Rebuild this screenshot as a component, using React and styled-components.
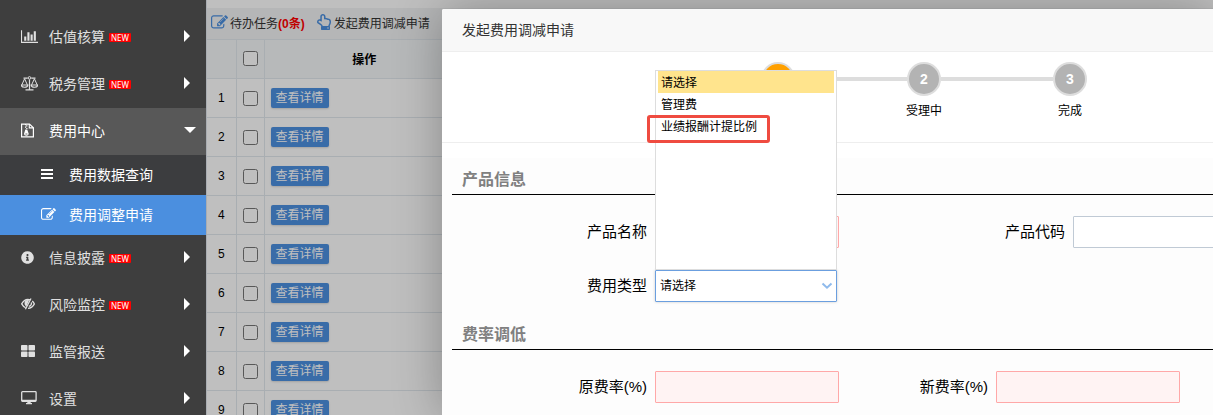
import React from "react"
import styled, { createGlobalStyle } from "styled-components"
import { FaInfoCircle, FaRegHandPointUp } from "react-icons/fa"

const GlobalStyle = createGlobalStyle`
  * {
    box-sizing: border-box;
  }
  body {
    margin: 0;
    font-family: "Liberation Sans", "Noto Sans CJK SC", sans-serif;
    font-size: 12px;
    color: #000;
  }
  button, input, select {
    font-family: inherit;
  }
`

const ChartIcon = () => (
  <svg width="17" height="15" viewBox="0 0 2048 1792" fill="currentColor">
    <path d="M640 896v512h-256v-512h256zm384-512v1024h-256v-1024h256zm1024 1152v128h-2048v-1536h128v1408h1920zm-640-896v768h-256v-768h256zm384-384v1152h-256v-1152h256z" />
  </svg>
)

const ScaleIcon = () => (
  <svg width="17" height="15" viewBox="0 0 17 15" fill="none" stroke="currentColor">
    <path d="M2.5 2.2h4.2M10.3 2.2h4.2M8.5 3.5v10M4.500 13.800h8" strokeWidth="1.200" />
    <circle cx="8.5" cy="1.9" r="1.3" />
    <path d="M3.6 2.8L.8 8.9M3.6 2.8l2.8 6.1M13.4 2.8l-2.8 6.1M13.4 2.8l2.8 6.1" />
    <path d="M.3 9h6.6c-.2 3-6.4 3-6.6 0zM10.1 9h6.6c-.2 3-6.4 3-6.6 0z" strokeWidth="1.200" />
  </svg>
)

const ArchiveIcon = () => (
  <svg width="13" height="15" viewBox="0 0 13 15" fill="none" stroke="currentColor">
    <path d="M.6 1.1h7.9l3.9 3.7v9.1H.6z" strokeWidth="1.2" />
    <path d="M8.3 1.1v3.8h4" strokeWidth="1.1" />
    <path d="M4 1.6h1.2M5.2 2.9h1.2M4 4.2h1.2M5.2 5.5h1.2" strokeWidth="1.2" />
    <path d="M4.3 6.4h1.900l1.400 4.200c.5 2.900-5 2.900-4.500 0z" fill="currentColor" stroke="none" />
    <path d="M4.4 11h2" stroke="#585858" strokeWidth=".9" />
  </svg>
)

const BarsIcon = () => (
  <svg width="12" height="12" viewBox="0 0 12 12" fill="currentColor">
    <path d="M0 1h12v2H0zM0 5h12v2H0zM0 9h12v2H0z" />
  </svg>
)

const EditIcon = ({ size = 15 }) => (
  <svg width={size} height={size} viewBox="0 0 1792 1792" fill="currentColor">
    <path d="M888 1184l116-116-152-152-116 116v56h96v96h56zm440-720q-16-16-33 1l-350 350q-17 17-1 33t33-1l350-350q17-17 1-33zm80 594v190q0 119-84.500 203.500t-203.500 84.500h-832q-119 0-203.500-84.500t-84.500-203.500v-832q0-119 84.500-203.500t203.500-84.500h832q63 0 117 25 15 7 18 23 3 17-9 29l-49 49q-14 14-32 8-23-6-45-6h-832q-66 0-113 47t-47 113v832q0 66 47 113t113 47h832q66 0 113-47t47-113v-126q0-13 9-22l64-64q15-15 35-7t20 29zm-96-738l288 288-672 672h-288v-288zm444 132l-92 92-288-288 92-92q28-28 68-28t68 28l152 152q28 28 28 68t-28 68z" />
  </svg>
)

const EyeSlashIcon = () => (
  <svg width="14" height="12" viewBox="0 0 14 12" fill="none" stroke="currentColor">
    <path d="M9.500 1.900C6 .8 2.600 2.300.7 5.900c1 1.900 2.300 3.100 3.900 3.800" strokeWidth="1.300" />
    <path d="M8 2.300C5.300 1.500 3.200 3.200 3.500 5.800c.1 1.200.9 2.200 1.900 2.700z" fill="currentColor" stroke="none" />
    <path d="M10 .5L4.400 11.300" strokeWidth="1.300" />
    <path d="M11.200 2.900c.9.700 1.600 1.700 2.200 3-1.400 2.700-3.500 4.300-6.400 4.500M10.400 4.400c.3 1.900-.7 3.400-2.600 4" strokeWidth="1.300" />
  </svg>
)

const GridIcon = () => (
  <svg width="14" height="12" viewBox="0 0 14 12" fill="currentColor">
    <rect width="6.500" height="5.500" rx=".8" />
    <rect x="7.500" width="6.500" height="5.500" rx=".8" />
    <rect y="6.500" width="6.500" height="5.500" rx=".8" />
    <rect x="7.500" y="6.500" width="6.500" height="5.500" rx=".8" />
  </svg>
)

const DesktopIcon = () => (
  <svg width="16" height="14" viewBox="0 0 16 14">
    <rect x=".7" y=".7" width="14.400" height="9.600" rx=".8" fill="none" stroke="currentColor" strokeWidth="1.300" />
    <path d="M.8 8.800h14.200v1.500H.8zM6.300 10.500h3.400v1.500h1.300v1.200H5v-1.200h1.300z" fill="currentColor" />
  </svg>
)

const menu = [
  { label: "估值核算", icon: <ChartIcon />, isNew: true },
  { label: "税务管理", icon: <ScaleIcon />, isNew: true },
  {
    label: "费用中心",
    icon: <ArchiveIcon />,
    open: true,
    children: [
      { label: "费用数据查询", icon: <BarsIcon /> },
      { label: "费用调整申请", icon: <EditIcon />, current: true },
    ],
  },
  { label: "信息披露", icon: <FaInfoCircle size={13} />, isNew: true },
  { label: "风险监控", icon: <EyeSlashIcon />, isNew: true },
  { label: "监管报送", icon: <GridIcon /> },
  { label: "设置", icon: <DesktopIcon /> },
]

const rows = [1, 2, 3, 4, 5, 6, 7, 8, 9]

const App = () => (
  <>
    <GlobalStyle />
    <Layout>
      <Sidebar>
        {menu.map(item => (
          <React.Fragment key={item.label}>
            <MenuItem href="#" $open={item.open}>
              <MenuIcon>{item.icon}</MenuIcon>
              {item.label}
              {item.isNew && <NewTag>NEW</NewTag>}
              <Arrow $open={item.open} />
            </MenuItem>
            {item.children && item.children.map(child => (
              <SubItem href="#" key={child.label} $current={child.current}>
                <MenuIcon>{child.icon}</MenuIcon>
                {child.label}
              </SubItem>
            ))}
          </React.Fragment>
        ))}
      </Sidebar>
      <Main>
        <Toolbar>
          <ToolButton type="button">
            <ToolIcon><EditIcon size={17} /></ToolIcon>
            <span>待办任务<Count>(0条)</Count></span>
          </ToolButton>
          <ToolButton type="button">
            <ToolIcon><FaRegHandPointUp size={16} /></ToolIcon>
            发起费用调减申请
          </ToolButton>
        </Toolbar>
        <Table>
          <colgroup>
            <Col $width={29} />
            <Col $width={28} />
            <Col $width={200} />
            <col />
          </colgroup>
          <thead>
            <tr>
              <Th />
              <Th><Check type="checkbox" aria-label="全选" /></Th>
              <Th>操作</Th>
              <Th />
            </tr>
          </thead>
          <tbody>
            {rows.map(n => (
              <tr key={n}>
                <Td>{n}</Td>
                <Td><Check type="checkbox" aria-label={`${n}`} /></Td>
                <Td $left><DetailButton type="button">查看详情</DetailButton></Td>
                <Td />
              </tr>
            ))}
          </tbody>
        </Table>
        <Shade>
          <Dialog role="dialog" aria-labelledby="dialog-title">
            <DialogTitle id="dialog-title">发起费用调减申请</DialogTitle>
            <Steps>
              <Step>
                <Dot $active>1</Dot>
              </Step>
              <Step>
                <Dot>2</Dot>
                受理中
              </Step>
              <Step>
                <Dot>3</Dot>
                完成
              </Step>
            </Steps>
            <Form>
              <SectionTitle>产品信息</SectionTitle>
              <FormRow $second={234}>
                <Label htmlFor="name">产品名称</Label>
                <Input id="name" $required />
                <Label htmlFor="code">产品代码</Label>
                <Input id="code" />
              </FormRow>
              <FormRow $second={234}>
                <Label htmlFor="type">费用类型</Label>
                <SelectBox>
                  <Select id="type">
                    <option>请选择</option>
                  </Select>
                  <Chevron viewBox="0 0 12 8">
                    <path d="M1.500 1.500L6 5.700l4.500-4.200" />
                  </Chevron>
                  <Options role="listbox">
                    <Option role="option" $selected aria-selected="true">请选择</Option>
                    <Option role="option">管理费</Option>
                    <Option role="option">
                      业绩报酬计提比例
                      <Highlight />
                    </Option>
                  </Options>
                </SelectBox>
              </FormRow>
              <SectionTitle>费率调低</SectionTitle>
              <FormRow $second={157}>
                <Label htmlFor="old-rate">原费率(%)</Label>
                <Input id="old-rate" $required />
                <Label htmlFor="new-rate">新费率(%)</Label>
                <Input id="new-rate" $required />
              </FormRow>
            </Form>
          </Dialog>
        </Shade>
      </Main>
    </Layout>
  </>
)

export default App

const Layout = styled.div`
  display: flex;
  height: 100vh;
  overflow: hidden;
`

const Sidebar = styled.nav`
  flex: 0 0 206px;
  padding-top: 14px;
  background: #3e3e3e;
`

const MenuItem = styled.a`
  display: flex;
  align-items: center;
  height: 47px;
  padding: 0 10px 3px 21px;
  font-size: 14px;
  color: ${props => (props.$open ? "#fff" : "#e0e0e0")};
  background: ${props => (props.$open ? "#585858" : "transparent")};
  text-decoration: none;
`

const SubItem = styled(MenuItem)`
  height: 40px;
  padding-bottom: 2px;
  padding-left: 41px;
  color: #fff;
  background: ${props => (props.$current ? "#4b8fdf" : "#3c3d3f")};
`

const MenuIcon = styled.span`
  display: flex;
  flex: 0 0 28px;
`

const NewTag = styled.span`
  margin: 3px 0 0 4px;
  padding: 0 2px;
  border-radius: 1px;
  background: #f00;
  color: #fff;
  font: 8px/9px "Noto Sans", sans-serif;
`

const Arrow = styled.i`
  width: 0;
  height: 0;
  margin-left: auto;
  margin-right: ${props => (props.$open ? 0 : "6px")};
  border-style: solid;
  border-width: ${props => (props.$open ? "6px 6px 0" : "6px 0 6px 6px")};
  border-color: ${props => (props.$open ? "#fff transparent" : "transparent #fff")};
`

const Main = styled.main`
  position: relative;
  flex: 1;
  min-width: 0;
  padding-top: 8px;
  overflow: hidden;
  border-left: 1px solid #a9adb2;
  background: #fff;
`

const Toolbar = styled.div`
  display: flex;
  align-items: center;
  gap: 11px;
  height: 31px;
  padding: 0 4px 3px;
  background: #f2f3f4;
`

const ToolButton = styled.button`
  display: flex;
  align-items: center;
  gap: 2px;
  padding: 0;
  border: 0;
  background: none;
  font-size: 12px;
  color: #333;
`

const ToolIcon = styled.span`
  display: flex;
  color: #4b8fdf;
`

const Count = styled.b`
  color: #f00;
`

const Table = styled.table`
  width: 100%;
  table-layout: fixed;
  border-collapse: collapse;
`

const Col = styled.col`
  width: ${props => props.$width}px;
`

const Td = styled.td`
  height: 39px;
  padding: 0 6px;
  border: 1px solid #e2e8ee;
  border-width: 1px 1px 0 0;
  text-align: ${props => (props.$left ? "left" : "center")};
  vertical-align: middle;
  &:nth-child(n + 3) {
    border-right: 0;
  }
`

const Th = styled(Td).attrs({ as: "th" })`
  padding-bottom: 2px;
  background: #f5f7f8;
`

const Check = styled.input`
  display: block;
  width: 15px;
  height: 15px;
  margin: 0 auto;
`

const DetailButton = styled.button`
  display: block;
  height: 20px;
  padding: 0 5px;
  border: 0;
  border-radius: 2px;
  background: #4d90e0;
  box-shadow: 0 1px 2px rgba(0, 0, 0, 0.15);
  color: #fff;
  font-size: 12px;
  line-height: 20px;
`

/* Covers the list while the dialog is open */
const Shade = styled.div`
  position: absolute;
  inset: 0;
  padding: 9px 0 0 235px;
  background: rgba(0, 0, 0, 0.25);
`

const Dialog = styled.section`
  height: 100%;
  border-radius: 2px 0 0 0;
  background: #fff;
  box-shadow: 1px 1px 50px rgba(0, 0, 0, 0.3);
`

const DialogTitle = styled.h2`
  height: 43px;
  margin: 0;
  padding: 0 20px;
  border-bottom: 1px solid #eee;
  border-radius: 2px 0 0 0;
  background: #f8f8f8;
  color: #333;
  font-size: 14px;
  font-weight: 400;
  line-height: 42px;
`

const Steps = styled.ol`
  display: flex;
  height: 91px;
  margin: 0;
  padding: 10px 0 0 263px;
  border-bottom: 1px solid #eee;
  list-style: none;
`

const Step = styled.li`
  position: relative;
  display: flex;
  flex: 0 0 146px;
  flex-direction: column;
  align-items: center;
  gap: 6px;
  line-height: 18px;
  /* bar to the next dot */
  &:not(:last-child):after {
    content: "";
    position: absolute;
    top: 15px;
    left: calc(50% + 17px);
    width: calc(100% - 34px);
    height: 4px;
    background: #ddd;
  }
`

const Dot = styled.span`
  width: 34px;
  height: 34px;
  border: 2px solid #ddd;
  border-radius: 50%;
  background: ${props => (props.$active ? "#ffa000" : "#b3b3b3")};
  color: #fff;
  font-size: 14px;
  font-weight: 700;
  line-height: 30px;
  text-align: center;
`

const Form = styled.form`
  margin-top: 15px;
  padding: 5px 0 60px 10px;
  background: #fdfdfd;
`

const SectionTitle = styled.h3`
  height: 32px;
  margin: 0 0 21px;
  padding-left: 10px;
  border-bottom: 1px solid #000;
  color: #808080;
  font-size: 16px;
  line-height: 33px;
`

const FormRow = styled.div`
  display: grid;
  grid-template-columns: 203px 184px ${props => props.$second}px 184px;
  align-items: center;
  margin-bottom: 22px;
  & + h3 {
    margin-top: -6px;
  }
`

const Label = styled.label`
  padding: 0 8px 3px 0;
  font-size: 15px;
  text-align: right;
`

const Input = styled.input`
  width: 100%;
  height: 32px;
  padding: 0 5px;
  border: 1px solid ${props => (props.$required ? "#ffa8a8" : "#c0cad5")};
  border-radius: 1px;
  background: ${props => (props.$required ? "#fff3f3" : "#fff")};
`

const SelectBox = styled.div`
  position: relative;
  width: 182px;
`

const Select = styled.select`
  display: block;
  width: 100%;
  height: 32px;
  padding: 0 4px;
  appearance: none;
  border: 1px solid #6b9fdf;
  border-radius: 1px;
  background: #fff;
  box-shadow: 0 0 3px rgba(0, 0, 0, 0.2);
  color: #000;
  font-size: 12px;
`

const Chevron = styled.svg`
  position: absolute;
  top: 12px;
  right: 4px;
  width: 12px;
  height: 8px;
  fill: none;
  stroke: #8fbaec;
  stroke-width: 2;
  pointer-events: none;
`

const Options = styled.ul`
  position: absolute;
  bottom: 100%;
  left: 0;
  width: 100%;
  height: 200px;
  margin: 0;
  padding: 0 2px;
  border: 1px solid #ddd;
  background: #fff;
  list-style: none;
`

const Option = styled.li`
  position: relative;
  height: 22px;
  padding: 0 3px;
  background: ${props => (props.$selected ? "#ffe48d" : "transparent")};
  line-height: 24px;
`

const Highlight = styled.span`
  position: absolute;
  top: 0;
  left: -11px;
  width: 123px;
  height: 28px;
  border: 3px solid #ef4b40;
  border-radius: 3px;
`
